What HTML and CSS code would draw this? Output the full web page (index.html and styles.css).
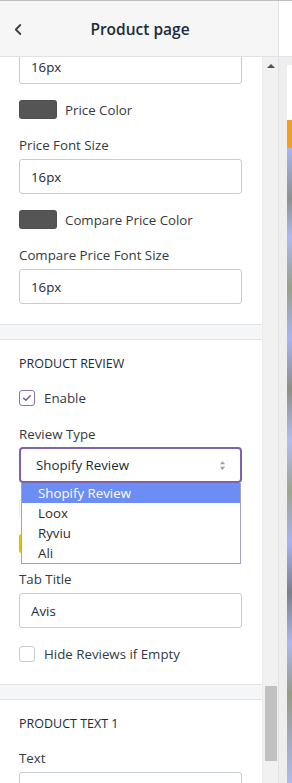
FILE: index.html
```html
<!DOCTYPE html>
<html lang="en">
<head>
    <meta charset="UTF-8">
    <meta name="viewport" content="width=device-width, initial-scale=1.0">
    <title>Product page - Settings</title>
    <link rel="stylesheet" href="styles.css">
</head>
<body>
    <div class="app">
        <!-- 左侧设置栏 -->
        <aside class="sidebar">
            <header class="sidebar-header">
                <svg class="back-icon" viewBox="0 0 10 14" fill="none" stroke="currentColor" stroke-width="2" stroke-linecap="round" stroke-linejoin="round">
                    <path d="M7 2L2 7l5 5"/>
                </svg>
                <h1>Product page</h1>
            </header>

            <div class="sidebar-body">
                <div class="panel">
                    <div class="panel-scroll">
                        <section class="card">
                            <div class="field">
                                <input type="text" value="16px">
                            </div>
                            <div class="color-row">
                                <span class="swatch" style="background:#555555"></span>
                                <span>Price Color</span>
                            </div>
                            <div class="field">
                                <label>Price Font Size</label>
                                <input type="text" value="16px">
                            </div>
                            <div class="color-row">
                                <span class="swatch" style="background:#555555"></span>
                                <span>Compare Price Color</span>
                            </div>
                            <div class="field">
                                <label>Compare Price Font Size</label>
                                <input type="text" value="16px">
                            </div>
                        </section>

                        <section class="card">
                            <h2>Product review</h2>
                            <label class="check-row">
                                <span class="checkbox checked">
                                    <svg viewBox="0 0 16 16" fill="none" stroke="currentColor" stroke-width="1.6" stroke-linecap="round" stroke-linejoin="round">
                                        <path d="M4.2 8.3l2.5 2.4 5-5.3"/>
                                    </svg>
                                </span>
                                Enable
                            </label>
                            <div class="field select-field">
                                <label>Review Type</label>
                                <div class="select">
                                    <span>Shopify Review</span>
                                    <svg class="select-arrows" viewBox="0 0 8 12" fill="currentColor">
                                        <path d="M4 1L7 4.5H1z M4 11L1 7.5h6z"/>
                                    </svg>
                                </div>
                                <!-- 展开的下拉列表 -->
                                <ul class="dropdown">
                                    <li class="active">Shopify Review</li>
                                    <li>Loox</li>
                                    <li>Ryviu</li>
                                    <li>Ali</li>
                                </ul>
                            </div>
                            <div class="color-row">
                                <span class="swatch" style="background:#ffffff"></span>
                                <span>Star Background</span>
                            </div>
                            <div class="color-row">
                                <span class="swatch" style="background:#f2c500"></span>
                                <span>Star Color</span>
                            </div>
                            <div class="field">
                                <label>Tab Title</label>
                                <input type="text" value="Avis">
                            </div>
                            <label class="check-row">
                                <span class="checkbox"></span>
                                Hide Reviews if Empty
                            </label>
                        </section>

                        <section class="card">
                            <h2>Product text 1</h2>
                            <div class="field">
                                <label>Text</label>
                                <input type="text" value="">
                            </div>
                        </section>
                    </div>
                </div>

                <div class="scrollbar">
                    <span class="scroll-up"></span>
                    <span class="scroll-thumb"></span>
                </div>
            </div>
        </aside>

        <!-- 右侧预览 -->
        <div class="preview">
            <div class="preview-top"></div>
            <div class="preview-frame">
                <div class="preview-page">
                    <div class="preview-bar"></div>
                    <div class="preview-photo"></div>
                </div>
            </div>
        </div>
    </div>
</body>
</html>
```

FILE: styles.css
```css
* {
    margin: 0;
    padding: 0;
    box-sizing: border-box;
}

body {
    font-family: "Open Sans", "Noto Sans", sans-serif;
    font-size: 13.3px;
    line-height: 20px;
    color: #212b36;
    background: #ffffff;
    overflow: hidden;
}

.app {
    display: flex;
    height: 783px;
    border-top: 1px solid #bfbfbf;
}

/* 侧边栏 */
.sidebar {
    width: 279px;
    display: flex;
    flex-direction: column;
    border-right: 1px solid #dfe3e8;
}

.sidebar-header {
    height: 56px;
    flex-shrink: 0;
    background: #f6f6f7;
    border-bottom: 1px solid #dfe3e8;
    display: flex;
    align-items: center;
    position: relative;
    justify-content: center;
}

.back-icon {
    position: absolute;
    left: 14px;
    top: 22px;
    width: 9px;
    height: 13px;
    color: #3a3f44;
}

.sidebar-header h1 {
    font-size: 15.5px;
    font-weight: 600;
    color: #212b36;
    margin-left: 2px;
}

.sidebar-body {
    flex: 1;
    display: flex;
    min-height: 0;
}

.panel {
    width: 262px;
    overflow: hidden;
    background: #f4f6f8;
}

.panel-scroll {
    margin-top: -8px;
    display: flex;
    flex-direction: column;
    gap: 14px;
}

.card {
    background: #ffffff;
    border-top: 1px solid #e3e6e9;
    border-bottom: 1px solid #e3e6e9;
    padding: 0 19px 20px 19px;
    display: flex;
    flex-direction: column;
    gap: 16px;
}

.card:first-child {
    border-top: none;
}

.card h2 {
    font-size: 12.5px;
    font-weight: 400;
    text-transform: uppercase;
    color: #212b36;
    margin-top: 14px;
    line-height: 20px;
    margin-bottom: -2px;
}

.field {
    display: flex;
    flex-direction: column;
    gap: 4px;
    position: relative;
}

.field label {
    color: #333a40;
}

.field input {
    height: 35px;
    width: 223px;
    border: 1px solid #c4cdd5;
    border-radius: 3px;
    padding: 0 11px;
    font-family: inherit;
    font-size: 13.3px;
    color: #212b36;
    background: #ffffff;
}

.color-row {
    display: flex;
    align-items: center;
    gap: 8px;
    height: 19px;
    color: #333a40;
}

.swatch {
    width: 38px;
    height: 19px;
    border-radius: 3px;
    border: 1px solid rgba(0, 0, 0, 0.08);
}

.check-row {
    display: flex;
    align-items: center;
    gap: 9px;
    height: 20px;
    color: #333a40;
}

.checkbox {
    width: 16px;
    height: 16px;
    border: 1px solid #c4cdd5;
    border-radius: 3px;
    background: #ffffff;
    display: flex;
}

.checkbox.checked {
    border-color: #8a74ad;
    color: #6d52a0;
}

.checkbox svg {
    width: 14px;
    height: 14px;
}

/* 下拉选择 */
.select-field {
    gap: 3px;
}

.select {
    height: 36px;
    width: 223px;
    border: 2px solid #7e62ab;
    border-radius: 4px;
    display: flex;
    align-items: center;
    justify-content: space-between;
    padding: 0 14px 0 15px;
    color: #212b36;
}

.select-arrows {
    width: 7px;
    height: 11px;
    color: #9aa1a7;
}

.dropdown {
    position: absolute;
    left: 2px;
    top: 59px;
    width: 220px;
    list-style: none;
    background: #ffffff;
    border: 1px solid #a7a0c2;
    border-top: none;
    z-index: 5;
}

.dropdown li {
    height: 20px;
    line-height: 20px;
    padding-left: 16px;
    color: #2c2c2c;
}

.dropdown li.active {
    background: #6c8ef4;
    color: #ffffff;
}

/* 滚动条 */
.scrollbar {
    width: 16px;
    background: #f1f1f1;
    position: relative;
    border-left: 1px solid #ececec;
}

.scroll-up {
    position: absolute;
    left: 4px;
    top: 7px;
    width: 0;
    height: 0;
    border-left: 4px solid transparent;
    border-right: 4px solid transparent;
    border-bottom: 4px solid #505050;
}

.scroll-thumb {
    position: absolute;
    left: 2px;
    top: 629px;
    width: 12px;
    height: 75px;
    background: #c1c1c1;
}

/* 预览区 */
.preview {
    flex: 1;
    display: flex;
    flex-direction: column;
}

.preview-top {
    height: 56px;
    background: #ffffff;
    border-bottom: 1px solid #e3e6e9;
}

.preview-frame {
    flex: 1;
    background: #eeeeef;
    padding: 8px 0 0 8px;
}

.preview-page {
    height: 100%;
    background: #ffffff;
    display: flex;
    flex-direction: column;
    padding-top: 55px;
}

.preview-bar {
    height: 28px;
    background: #f0a020;
}

.preview-photo {
    flex: 1;
    background: linear-gradient(180deg, #a9b4f2 0%, #8d9190 8%, #b0b8f0 14%, #98a08a 22%, #aab2f4 30%, #8e8e86 38%, #b4bcf2 46%, #9ea48e 54%, #a8b2f4 62%, #7c7e8a 70%, #b0b6ee 78%, #969a88 86%, #b2b8f0 100%);
}
```
